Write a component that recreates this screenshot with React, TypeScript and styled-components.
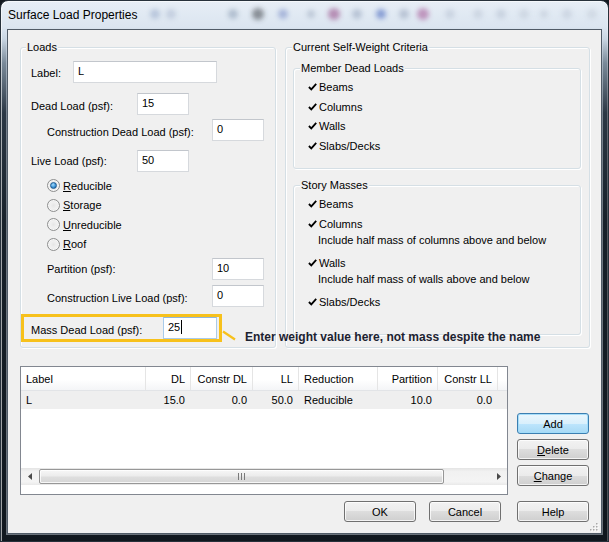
import React from 'react';
import styled, { createGlobalStyle } from 'styled-components';

const GlobalStyle = createGlobalStyle`
  html, body {
    margin: 0;
    padding: 0;
    background: #121920;
  }
  body {
    width: 609px;
    height: 542px;
    overflow: hidden;
    font-family: "Liberation Sans", Arial, sans-serif;
  }
`;

const COLS = '125px 45px 62px 46px 79px 60px 60px 1fr';

const columns = [
  { key: 'label', title: 'Label', right: false },
  { key: 'dl', title: 'DL', right: true },
  { key: 'cdl', title: 'Constr DL', right: true },
  { key: 'll', title: 'LL', right: true },
  { key: 'red', title: 'Reduction', right: false },
  { key: 'part', title: 'Partition', right: true },
  { key: 'cll', title: 'Constr LL', right: true },
];

const rows = [
  { label: 'L', dl: '15.0', cdl: '0.0', ll: '50.0', red: 'Reducible', part: '10.0', cll: '0.0' },
];

const blobs = [
  { x: 154, r: 5, c: '#8fa3c4' },
  { x: 170, r: 5, c: '#a7b4cc' },
  { x: 232, r: 5, c: '#7f93aa' },
  { x: 257, r: 6, c: '#2e3338' },
  { x: 282, r: 5, c: '#6c80c0' },
  { x: 310, r: 4, c: '#95a3b8' },
  { x: 333, r: 6, c: '#8a3276' },
  { x: 356, r: 5, c: '#8d9cb6' },
  { x: 380, r: 5, c: '#2c4fb4' },
  { x: 403, r: 5, c: '#8f9db5' },
  { x: 422, r: 6, c: '#9b3f87' },
  { x: 449, r: 5, c: '#b4bfd0' },
  { x: 477, r: 5, c: '#b9c3d2' },
  { x: 500, r: 5, c: '#b0bccd' },
  { x: 523, r: 5, c: '#bcc6d4' },
  { x: 543, r: 4, c: '#b8c2d1' },
  { x: 566, r: 5, c: '#b9c3d3' },
  { x: 591, r: 5, c: '#c0c9d6' },
];

const Window = styled.div`
  width: 609px;
  height: 542px;
  box-sizing: border-box;
  display: flex;
  flex-direction: column;
  border: 1px solid #27313b;
  border-radius: 8px 8px 0 0;
  background: linear-gradient(
    180deg,
    #e7eef6 0px,
    #dbe5f0 26px,
    #c8d5e2 38px,
    #7a8a99 62px,
    #2c3845 112px,
    #18212a 220px,
    #10171e 100%
  );
  box-shadow: inset 1px 1px 0 rgba(255, 255, 255, 0.6), inset -1px 0 0 rgba(255, 255, 255, 0.25);
  overflow: hidden;
`;

const TitleBar = styled.div`
  position: relative;
  height: 28px;
  display: flex;
  align-items: center;
  padding-left: 7px;
  font-size: 12px;
  color: #000;
`;

const Glass = styled.svg`
  position: absolute;
  left: 0;
  top: 0;
`;

const TitleText = styled.span`
  position: relative;
  white-space: nowrap;
`;

const Client = styled.div`
  position: relative;
  margin: 0 6px;
  height: 505px;
  box-sizing: border-box;
  border: 1px solid #505b67;
  box-shadow: 0 0 0 1px rgba(215, 225, 236, 0.45);
  background: #f0f0f0;
  padding: 17px 11px 0 12px;
  display: flex;
  flex-direction: column;
  font-size: 11px;
  color: #000;
`;

const GroupsRow = styled.div`
  display: flex;
  gap: 9px;
`;

const GroupBox = styled.div<{ $w?: number; $h: number; $mt?: number; $ml?: number; $mr?: number }>`
  box-sizing: border-box;
  ${p => (p.$w ? `width: ${p.$w}px;` : '')}
  height: ${p => p.$h}px;
  margin: ${p => p.$mt ?? 0}px ${p => p.$mr ?? 0}px 0 ${p => p.$ml ?? 0}px;
  border: 1px solid #d5dfe5;
  border-radius: 3px;
  box-shadow: inset 1px 1px 0 #fff, 1px 1px 0 #fff;
  display: flex;
  flex-direction: column;
`;

const Caption = styled.div<{ $x: number }>`
  align-self: flex-start;
  margin: -8px 0 0 ${p => p.$x}px;
  padding: 0 1px;
  height: 14px;
  line-height: 14px;
  background: #f0f0f0;
  white-space: nowrap;
`;

const FieldRow = styled.div<{ $mt: number; $indent: number }>`
  display: flex;
  align-items: center;
  height: 22px;
  margin-top: ${p => p.$mt}px;
  padding-left: ${p => p.$indent}px;
`;

const FieldLabel = styled.span<{ $w: number; $dy?: number }>`
  flex: none;
  width: ${p => p.$w}px;
  padding-top: ${p => (p.$dy ?? 0) * 2}px;
  white-space: nowrap;
`;

const TextBox = styled.div<{ $w: number; $focused?: boolean }>`
  flex: none;
  box-sizing: border-box;
  width: ${p => p.$w}px;
  height: 22px;
  padding: 0 4px 2px;
  display: flex;
  align-items: center;
  background: #fff;
  border: 1px solid ${p => (p.$focused ? '#a9cbea' : '#d6d9dd')};
  border-top-color: ${p => (p.$focused ? '#8fb6de' : '#c2c6cc')};
`;

const Caret = styled.span`
  width: 1px;
  height: 14px;
  margin-left: 1px;
  background: #000;
`;

const RadioRow = styled.div`
  display: flex;
  align-items: center;
  gap: 3px;
  height: 19.5px;
  padding-left: 26px;
`;

const RadioDot = styled.span<{ $checked?: boolean }>`
  flex: none;
  width: 13px;
  height: 13px;
  box-sizing: border-box;
  border-radius: 50%;
  border: 1px solid #8e8f8f;
  background: radial-gradient(circle at 50% 50%, #e6e6e6 0, #f1f1f1 45%, #d4d4d4 100%);
  box-shadow: inset 0 0 0 1px #f8f8f8;
  display: flex;
  align-items: center;
  justify-content: center;
  &::after {
    content: '';
    display: ${p => (p.$checked ? 'block' : 'none')};
    width: 5px;
    height: 5px;
    border-radius: 50%;
    border: 1px solid #1f5b91;
    background: radial-gradient(circle at 40% 35%, #a8dcfb 0, #3d95d8 55%, #17548f 100%);
  }
`;

const MassBox = styled.div`
  position: relative;
  box-sizing: border-box;
  width: 201px;
  height: 28px;
  margin-top: 7px;
  border: 3px solid #f7c11c;
  padding-left: 7px;
  display: flex;
  align-items: center;
`;

const Annotation = styled.div`
  position: absolute;
  left: 198px;
  top: 13px;
  z-index: 2;
  display: flex;
  align-items: flex-start;
  gap: 9px;
`;

const AnnotationText = styled.span`
  font-weight: bold;
  font-size: 12px;
  line-height: 14px;
  color: #1c2230;
  white-space: nowrap;
`;

const CheckList = styled.div`
  padding-top: 2px;
  display: flex;
  flex-direction: column;
`;

const CheckRow = styled.div<{ $h: number }>`
  display: flex;
  align-items: center;
  gap: 2px;
  height: ${p => p.$h}px;
  padding-left: 14px;
  white-space: nowrap;
`;

const Note = styled.div`
  height: 12px;
  line-height: 12px;
  margin-bottom: 7px;
  padding-left: 24px;
  white-space: nowrap;
`;

const CheckSvg = styled.svg`
  flex: none;
`;

const BottomArea = styled.div`
  display: flex;
  margin-top: 18px;
`;

const ListView = styled.div`
  box-sizing: border-box;
  width: 488px;
  height: 129px;
  border: 1px solid #828790;
  background: #fff;
  display: flex;
  flex-direction: column;
`;

const HeaderRow = styled.div`
  display: grid;
  grid-template-columns: ${COLS};
  height: 24px;
  box-sizing: border-box;
  border-bottom: 1px solid #e2e4e7;
  background: linear-gradient(#ffffff 0%, #ffffff 55%, #f4f5f7 100%);
`;

const HeaderCell = styled.div<{ $right?: boolean }>`
  display: flex;
  align-items: center;
  justify-content: ${p => (p.$right ? 'flex-end' : 'flex-start')};
  padding: 0 5px;
  box-sizing: border-box;
  border-right: 1px solid #e5e5e5;
  white-space: nowrap;
  overflow: hidden;
`;

const HeaderFill = styled.div``;

const DataRow = styled.div`
  display: grid;
  grid-template-columns: ${COLS};
  height: 18px;
  background: #efefef;
`;

const DataCell = styled.div<{ $right?: boolean }>`
  display: flex;
  align-items: center;
  justify-content: ${p => (p.$right ? 'flex-end' : 'flex-start')};
  padding: 0 6px 0 5px;
  white-space: nowrap;
`;

const ListBody = styled.div`
  flex: 1;
`;

const HScroll = styled.div`
  display: flex;
  align-items: center;
  height: 17px;
  margin-bottom: 9px;
  background: linear-gradient(#e4e4e4 0, #f1f1f1 20%, #f4f4f4 80%, #e9e9e9 100%);
`;

const ScrollArrow = styled.div`
  flex: none;
  width: 17px;
  height: 17px;
  display: flex;
  align-items: center;
  justify-content: center;
`;

const Thumb = styled.div`
  flex: none;
  width: 405px;
  height: 15px;
  margin-left: 1px;
  box-sizing: border-box;
  border: 1px solid #979797;
  border-radius: 2px;
  background: linear-gradient(#f7f7f7 0%, #ececec 45%, #dedede 55%, #d6d6d6 100%);
  box-shadow: inset 0 0 0 1px rgba(255, 255, 255, 0.8);
  display: flex;
  align-items: center;
  justify-content: center;
`;

const Track = styled.div`
  flex: 1;
`;

const SideButtons = styled.div`
  display: flex;
  flex-direction: column;
  gap: 5px;
  padding-top: 47px;
  margin-left: 9px;
`;

const Footer = styled.div`
  display: flex;
  justify-content: flex-end;
  margin-top: 6px;
  margin-right: 1px;
`;

const Button = styled.button<{ $default?: boolean; $ml?: number }>`
  box-sizing: border-box;
  width: 72px;
  height: 21px;
  padding: 0;
  margin-left: ${p => p.$ml ?? 0}px;
  font: 11px "Liberation Sans", Arial, sans-serif;
  color: #000;
  border: 1px solid ${p => (p.$default ? '#3c7fb1' : '#707070')};
  border-radius: 3px;
  background: ${p =>
    p.$default
      ? 'linear-gradient(#eaf6fd 0%, #d9f0fc 50%, #bee6fd 50%, #a7d9f5 100%)'
      : 'linear-gradient(#f2f2f2 0%, #ebebeb 50%, #dddddd 50%, #cfcfcf 100%)'};
  box-shadow: inset 0 0 0 1px ${p => (p.$default ? 'rgba(160, 220, 250, 0.9)' : 'rgba(255, 255, 255, 0.75)')};
`;

const Grip = styled.svg`
  position: absolute;
  right: 2px;
  bottom: 1px;
`;

const CheckMark = () => (
  <CheckSvg width="9" height="8" viewBox="0 0 9 8">
    <path d="M0.9 4 L3.3 6.4 L8.2 0.9" fill="none" stroke="#000" strokeWidth="1.8" />
  </CheckSvg>
);

const Field = ({
  label, value, mt, indent, labelW, boxW, dy,
}: { label: string; value: string; mt: number; indent: number; labelW: number; boxW: number; dy?: number }) => (
  <FieldRow $mt={mt} $indent={indent}>
    <FieldLabel $w={labelW} $dy={dy}>{label}</FieldLabel>
    <TextBox $w={boxW}>{value}</TextBox>
  </FieldRow>
);

const Radio = ({ mnemonic, rest, checked }: { mnemonic: string; rest: string; checked?: boolean }) => (
  <RadioRow>
    <RadioDot $checked={checked} />
    <span><u>{mnemonic}</u>{rest}</span>
  </RadioRow>
);

const App = () => {
  return (
    <>
      <GlobalStyle />
      <Window>
        <TitleBar>
          <Glass width="607" height="28">
            <defs>
              <filter id="blur" x="-50%" y="-50%" width="200%" height="200%">
                <feGaussianBlur stdDeviation="2.4" />
              </filter>
            </defs>
            <g filter="url(#blur)" opacity="0.5">
              {blobs.map(b => (
                <circle key={b.x} cx={b.x} cy={13} r={b.r} fill={b.c} />
              ))}
            </g>
          </Glass>
          <TitleText>Surface Load Properties</TitleText>
        </TitleBar>

        <Client>
          <GroupsRow>
            <GroupBox $w={256} $h={301}>
              <Caption $x={5}>Loads</Caption>
              <Field label="Label:" value="L" mt={7} indent={10} labelW={42} boxW={144} dy={1} />
              <Field label="Dead Load (psf):" value="15" mt={10} indent={10} labelW={106} boxW={52} dy={1.5} />
              <Field label="Construction Dead Load (psf):" value="0" mt={4} indent={26} labelW={165} boxW={52} dy={1.5} />
              <Field label="Live Load (psf):" value="50" mt={9} indent={10} labelW={106} boxW={52} />
              <div style={{ marginTop: 4 }}>
                <Radio mnemonic="R" rest="educible" checked />
                <Radio mnemonic="S" rest="torage" />
                <Radio mnemonic="U" rest="nreducible" />
                <Radio mnemonic="R" rest="oof" />
              </div>
              <Field label="Partition (psf):" value="10" mt={4} indent={26} labelW={165} boxW={52} />
              <Field label="Construction Live Load (psf):" value="0" mt={5} indent={26} labelW={165} boxW={52} dy={1.5} />
              <MassBox>
                <FieldLabel $w={132} $dy={2}>Mass Dead Load (psf):</FieldLabel>
                <TextBox $w={54} $focused>25<Caret /></TextBox>
                <Annotation>
                  <svg width="14" height="11" viewBox="0 0 14 11">
                    <line x1="1" y1="1.5" x2="13" y2="9.5" stroke="#f7c11c" strokeWidth="2.2" />
                  </svg>
                  <AnnotationText>Enter weight value here, not mass despite the name</AnnotationText>
                </Annotation>
              </MassBox>
            </GroupBox>

            <GroupBox $w={305} $h={301}>
              <Caption $x={6}>Current Self-Weight Criteria</Caption>
              <GroupBox $h={101} $mt={14} $ml={7} $mr={8}>
                <Caption $x={6}>Member Dead Loads</Caption>
                <CheckList>
                  {['Beams', 'Columns', 'Walls', 'Slabs/Decks'].map(t => (
                    <CheckRow key={t} $h={19.75}><CheckMark />{t}</CheckRow>
                  ))}
                </CheckList>
              </GroupBox>
              <GroupBox $h={150} $mt={16} $ml={7} $mr={8}>
                <Caption $x={6}>Story Masses</Caption>
                <CheckList>
                  <CheckRow $h={20}><CheckMark />Beams</CheckRow>
                  <CheckRow $h={20}><CheckMark />Columns</CheckRow>
                  <Note>Include half mass of columns above and below</Note>
                  <CheckRow $h={20}><CheckMark />Walls</CheckRow>
                  <Note>Include half mass of walls above and below</Note>
                  <CheckRow $h={20}><CheckMark />Slabs/Decks</CheckRow>
                </CheckList>
              </GroupBox>
            </GroupBox>
          </GroupsRow>

          <BottomArea>
            <ListView>
              <HeaderRow>
                {columns.map(c => (
                  <HeaderCell key={c.key} $right={c.right}>{c.title}</HeaderCell>
                ))}
                <HeaderFill />
              </HeaderRow>
              <ListBody>
                {rows.map(r => (
                  <DataRow key={r.label}>
                    {columns.map(c => (
                      <DataCell key={c.key} $right={c.right}>{r[c.key as keyof typeof r]}</DataCell>
                    ))}
                    <div />
                  </DataRow>
                ))}
              </ListBody>
              <HScroll>
                <ScrollArrow>
                  <svg width="4" height="7" viewBox="0 0 4 7"><path d="M4 0 L0 3.5 L4 7 Z" fill="#4a4a4a" /></svg>
                </ScrollArrow>
                <Thumb>
                  <svg width="8" height="7" viewBox="0 0 8 7">
                    <path d="M0.5 0 V7 M3.5 0 V7 M6.5 0 V7" stroke="#7a7a7a" strokeWidth="1" />
                  </svg>
                </Thumb>
                <Track />
                <ScrollArrow>
                  <svg width="4" height="7" viewBox="0 0 4 7"><path d="M0 0 L4 3.5 L0 7 Z" fill="#4a4a4a" /></svg>
                </ScrollArrow>
              </HScroll>
            </ListView>
            <SideButtons>
              <Button $default>Add</Button>
              <Button><u>D</u>elete</Button>
              <Button><u>C</u>hange</Button>
            </SideButtons>
          </BottomArea>

          <Footer>
            <Button>OK</Button>
            <Button $ml={13}>Cancel</Button>
            <Button $ml={16}>Help</Button>
          </Footer>

          <Grip width="10" height="10" viewBox="0 0 10 10">
            {[[8, 2], [8, 5], [5, 5], [8, 8], [5, 8], [2, 8]].map(([x, y]) => (
              <g key={`${x}-${y}`}>
                <rect x={x} y={y} width="1.5" height="1.5" fill="#fff" />
                <rect x={x - 1} y={y - 1} width="1.5" height="1.5" fill="#a9a9a9" />
              </g>
            ))}
          </Grip>
        </Client>
      </Window>
    </>
  );
};

export default App;
